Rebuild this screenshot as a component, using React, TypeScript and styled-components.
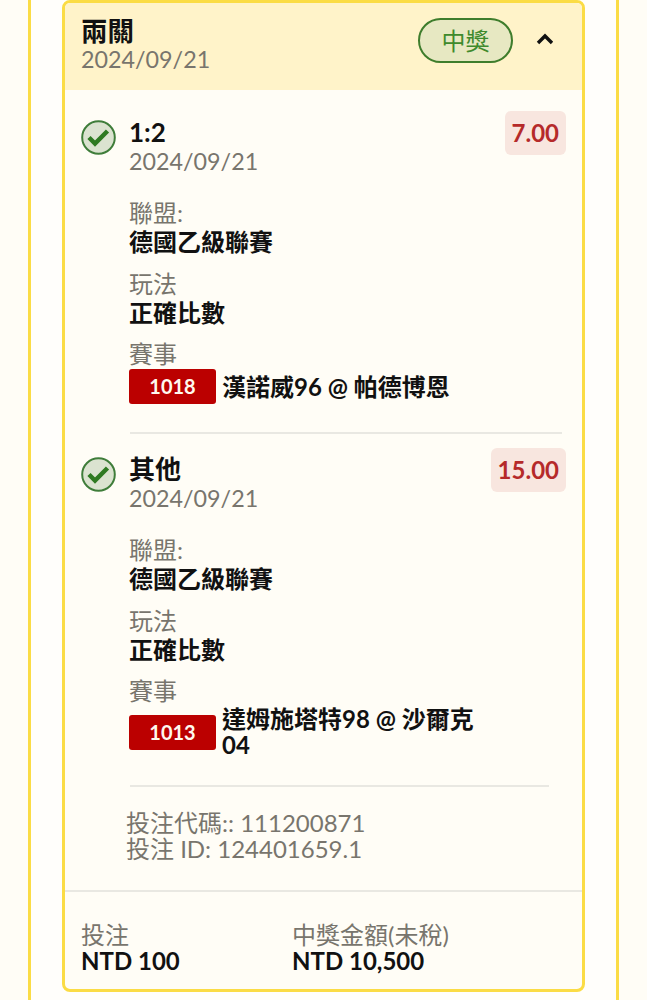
import styled, { createGlobalStyle } from "styled-components";

const GlobalStyle = createGlobalStyle`
  html, body {
    margin: 0;
    padding: 0;
    background: #fffdf6;
    font-family: Lato, "Noto Sans CJK TC", sans-serif;
  }
`;

const Page = styled.div`
  height: 1000px;
  overflow: hidden;
  padding: 0 28px;
  box-sizing: border-box;
`;

const Panel = styled.div`
  height: 1000px;
  box-sizing: border-box;
  background: #fffefb;
  border-left: 3px solid #fbdc45;
  border-right: 3px solid #fbdc45;
  padding: 0 31px;
`;

const Card = styled.div`
  border: 3px solid #fbdc45;
  border-radius: 8px;
  background: #fffdf6;
  overflow: hidden;
`;

const Header = styled.div`
  height: 87px;
  box-sizing: border-box;
  background: #fff3c9;
  padding: 14px 6px 0 16px;
  display: flex;
  align-items: flex-start;
`;

const HeaderText = styled.div`
  flex: 1;
`;

const Title = styled.div`
  font-size: 26.5px;
  line-height: 28px;
  font-weight: 700;
  color: #111;
`;

const DateText = styled.div`
  font-size: 23.3px;
  line-height: 28px;
  color: #78756d;
`;

const StatusPill = styled.div`
  width: 95px;
  height: 45px;
  margin-top: 1px;
  box-sizing: border-box;
  border: 2px solid #3f7d2c;
  border-radius: 23px;
  background: #e7e8c2;
  color: #3f8a2c;
  font-size: 24px;
  line-height: 41px;
  text-align: center;
`;

const Toggle = styled.div`
  width: 63px;
  height: 43px;
  display: flex;
  align-items: center;
  justify-content: center;
`;

const Leg = styled.div<{ $first: boolean }>`
  padding: ${(p) => (p.$first ? 21 : 14)}px 16px 0 16px;
`;

const LegTop = styled.div`
  display: flex;
  align-items: flex-start;
`;

const CheckWrap = styled.div`
  width: 35px;
  height: 35px;
  margin-top: 9px;
  margin-right: 13px;
  flex: none;
`;

const LegHead = styled.div`
  flex: 1;
`;

const Pick = styled.div`
  font-size: 26px;
  line-height: 29px;
  margin-top: 7px;
  font-weight: 700;
  color: #111;
`;

const Odds = styled.div`
  height: 44px;
  padding: 0 7px;
  border-radius: 6px;
  background: #f8e6df;
  color: #b52a2a;
  font-size: 24px;
  line-height: 44px;
  font-weight: 700;
`;

const Fields = styled.div`
  padding-left: 48px;
  margin-top: 23px;
`;

const FieldLabel = styled.div`
  font-size: 24px;
  line-height: 30px;
  color: #78756d;
`;

const FieldValue = styled.div`
  font-size: 24px;
  line-height: 28px;
  font-weight: 700;
  color: #111;
  margin-bottom: 12.6px;
`;

const MatchRow = styled.div`
  display: flex;
  align-items: center;
  width: 353px;
`;

const MatchCode = styled.div`
  width: 87px;
  height: 35px;
  flex: none;
  margin-right: 6px;
  border-radius: 3px;
  background: #bb0000;
  color: #fff8ee;
  font-size: 20px;
  font-weight: 700;
  line-height: 35px;
  text-align: center;
`;

const MatchName = styled.div`
  font-size: 24px;
  line-height: 26px;
  font-weight: 700;
  color: #111;
`;

const LegDivider = styled.hr`
  height: 2px;
  border: 0;
  margin: 28px 4px 0 49px;
  background: #e9e8e2;
`;

const MetaDivider = styled.hr`
  height: 2px;
  border: 0;
  margin: 27px 33px 0 65px;
  background: #e9e8e2;
`;

const BetMeta = styled.div`
  padding: 23px 0 0 61px;
  font-size: 24px;
  line-height: 26px;
  color: #78756d;
`;

const Footer = styled.div`
  margin-top: 28px;
  height: 99px;
  box-sizing: border-box;
  border-top: 2px solid #e9e8e2;
  padding: 29px 0 0 16px;
  display: flex;
`;

const Amount = styled.div<{ $width: number }>`
  width: ${(p) => p.$width}px;
`;

const AmountLabel = styled.div`
  font-size: 24px;
  line-height: 28px;
  color: #78756d;
`;

const AmountValue = styled.div`
  font-size: 24px;
  line-height: 24px;
  font-weight: 700;
  color: #111;
`;

function CheckIcon() {
  return (
    <svg width="35" height="35" viewBox="0 0 35 35">
      <circle cx="17.5" cy="17.5" r="16.3" fill="#dbe3d0" stroke="#3f7d3a" strokeWidth="2" />
      <path d="M8 17.5l6 6L26.5 11" fill="none" stroke="#2f7a22" strokeWidth="4.5" />
    </svg>
  );
}

function ChevronUp() {
  return (
    <svg width="20" height="14" viewBox="0 0 20 14">
      <path d="M3 11l7-7 7 7" fill="none" stroke="#111" strokeWidth="3.4" />
    </svg>
  );
}

type LegData = { pick: string; odds: string; code: string; match: string; divider: boolean };

const legs: LegData[] = [
  { pick: "1:2", odds: "7.00", code: "1018", match: "漢諾威96 @ 帕德博恩", divider: true },
  { pick: "其他", odds: "15.00", code: "1013", match: "達姆施塔特98 @ 沙爾克 04", divider: false },
];

export default function App() {
  return (
    <>
      <GlobalStyle />
      <Page>
        <Panel>
          <Card>
            <Header>
              <HeaderText>
                <Title>兩關</Title>
                <DateText>2024/09/21</DateText>
              </HeaderText>
              <StatusPill>中獎</StatusPill>
              <Toggle>
                <ChevronUp />
              </Toggle>
            </Header>
            {legs.map((leg, i) => (
              <Leg key={leg.code} $first={i === 0}>
                <LegTop>
                  <CheckWrap>
                    <CheckIcon />
                  </CheckWrap>
                  <LegHead>
                    <Pick>{leg.pick}</Pick>
                    <DateText>2024/09/21</DateText>
                  </LegHead>
                  <Odds>{leg.odds}</Odds>
                </LegTop>
                <Fields>
                  <FieldLabel>聯盟:</FieldLabel>
                  <FieldValue>德國乙級聯賽</FieldValue>
                  <FieldLabel>玩法</FieldLabel>
                  <FieldValue>正確比數</FieldValue>
                  <FieldLabel>賽事</FieldLabel>
                  <MatchRow>
                    <MatchCode>{leg.code}</MatchCode>
                    <MatchName>{leg.match}</MatchName>
                  </MatchRow>
                </Fields>
                {leg.divider && <LegDivider />}
              </Leg>
            ))}
            <MetaDivider />
            <BetMeta>
              投注代碼:: 111200871
              <br />
              投注 ID: 124401659.1
            </BetMeta>
            <Footer>
              <Amount $width={211}>
                <AmountLabel>投注</AmountLabel>
                <AmountValue>NTD 100</AmountValue>
              </Amount>
              <Amount $width={240}>
                <AmountLabel>中獎金額(未稅)</AmountLabel>
                <AmountValue>NTD 10,500</AmountValue>
              </Amount>
            </Footer>
          </Card>
        </Panel>
      </Page>
    </>
  );
}
